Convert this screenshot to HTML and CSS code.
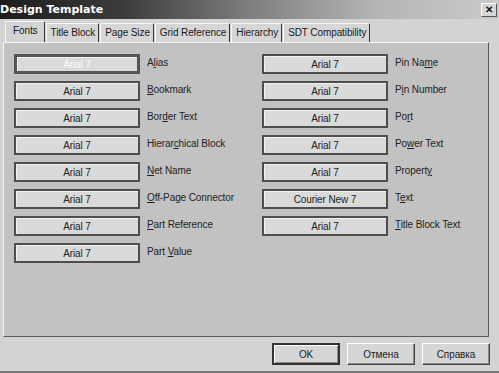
FILE: index.html
```html
<!DOCTYPE html>
<html lang="en">

<head>
    <meta charset="UTF-8">
    <title>Design Template</title>
    <link rel="stylesheet" href="styles.css">
</head>

<body>
    <div class="dialog">
        <div class="titlebar">
            <span class="title">Design Template</span>
            <span class="close">&#x2715;</span>
        </div>

        <ul class="tabs">
            <li class="tab active">Fonts</li>
            <li class="tab">Title Block</li>
            <li class="tab">Page Size</li>
            <li class="tab">Grid Reference</li>
            <li class="tab">Hierarchy</li>
            <li class="tab">SDT Compatibility</li>
        </ul>

        <div class="panel">
            <div class="col">
                <div class="row"><button class="font-btn focused">Arial 7</button><span class="label">A<u>l</u>ias</span></div>
                <div class="row"><button class="font-btn">Arial 7</button><span class="label"><u>B</u>ookmark</span></div>
                <div class="row"><button class="font-btn">Arial 7</button><span class="label">Bor<u>d</u>er Text</span></div>
                <div class="row"><button class="font-btn">Arial 7</button><span class="label">Hierar<u>c</u>hical Block</span></div>
                <div class="row"><button class="font-btn">Arial 7</button><span class="label"><u>N</u>et Name</span></div>
                <div class="row"><button class="font-btn">Arial 7</button><span class="label"><u>O</u>ff-Page Connector</span></div>
                <div class="row"><button class="font-btn">Arial 7</button><span class="label"><u>P</u>art Reference</span></div>
                <div class="row"><button class="font-btn">Arial 7</button><span class="label">Part <u>V</u>alue</span></div>
            </div>
            <div class="col">
                <div class="row"><button class="font-btn">Arial 7</button><span class="label">Pin Na<u>m</u>e</span></div>
                <div class="row"><button class="font-btn">Arial 7</button><span class="label">P<u>i</u>n Number</span></div>
                <div class="row"><button class="font-btn">Arial 7</button><span class="label">Po<u>r</u>t</span></div>
                <div class="row"><button class="font-btn">Arial 7</button><span class="label">Po<u>w</u>er Text</span></div>
                <div class="row"><button class="font-btn">Arial 7</button><span class="label">Propert<u>y</u></span></div>
                <div class="row"><button class="font-btn">Courier New 7</button><span class="label">T<u>e</u>xt</span></div>
                <div class="row"><button class="font-btn">Arial 7</button><span class="label"><u>T</u>itle Block Text</span></div>
            </div>
        </div>

        <div class="footer">
            <button class="dlg-btn default">OK</button>
            <button class="dlg-btn">Отмена</button>
            <button class="dlg-btn">Справка</button>
        </div>
    </div>
</body>

</html>
```

FILE: styles.css
```css
* {
    margin: 0;
    padding: 0;
    box-sizing: border-box;
}

body {
    font-family: "Liberation Sans", Arial, sans-serif;
    font-size: 10px;
    letter-spacing: -0.1px;
    color: #1a1a1a;
    background: #d3d3d3;
    overflow: hidden;
}

.dialog {
    width: 499px;
    height: 373px;
    background: #d3d3d3;
    border-bottom: 2px solid #7a7a7a;
}

.titlebar {
    height: 19px;
    display: flex;
    align-items: center;
    justify-content: space-between;
    padding-right: 2px;
    background: linear-gradient(to right, #1c1c1c 0%, #3c3c3c 25%, #7e7e7e 50%, #b4b4b4 75%, #cacaca 100%);
}

.title {
    color: #fff;
    font-family: "DejaVu Sans", sans-serif;
    font-weight: bold;
    font-size: 11px;
    letter-spacing: 0;
}

.close {
    width: 16px;
    height: 14px;
    display: flex;
    align-items: center;
    justify-content: center;
    background: #d6d6d6;
    border: 1px solid;
    border-color: #fff #555 #555 #fff;
    font-size: 10px;
    font-weight: bold;
    color: #111;
}

.tabs {
    list-style: none;
    display: flex;
    align-items: flex-end;
    height: 23px;
    padding-left: 5px;
}

.tab {
    height: 19px;
    padding: 0 3px 0 4px;
    line-height: 18px;
    border: 1px solid;
    border-color: #f6f6f6 #333 transparent #f6f6f6;
    border-bottom: none;
    border-radius: 2px 2px 0 0;
    background: #d6d6d6;
    margin-right: 1px;
}

.tab.active {
    height: 21px;
    padding: 0 6px 0 7px;
    background: #d3d3d3;
}

.panel {
    margin: 0 10px 0 3px;
    height: 295px;
    background: #c2c2c2;
    border: 1px solid;
    border-color: #f4f4f4 #5a5a5a #5a5a5a #f4f4f4;
    padding: 11px 0 0 10px;
    display: flex;
}

.col {
    width: 248px;
    flex: none;
    display: flex;
    flex-direction: column;
    gap: 7px;
}

.col + .col {
    flex: 1;
    width: auto;
}

.row {
    display: flex;
    align-items: center;
    height: 20px;
}

.font-btn {
    width: 126px;
    height: 20px;
    flex: none;
    font-family: "Liberation Sans", Arial, sans-serif;
    font-size: 10px;
    letter-spacing: -0.1px;
    color: #222;
    background: #dadada;
    border: 2px solid #4e4e4e;
    box-shadow: inset 1px 1px 0 #f2f2f2;
}

.font-btn.focused {
    color: #fafafa;
    border-width: 3px;
    border-color: #555;
}

.label {
    margin-left: 7px;
    margin-top: -3px;
    color: #222;
    white-space: nowrap;
}

.footer {
    display: flex;
    justify-content: flex-end;
    gap: 7px;
    padding: 6px 9px 0 0;
}

.dlg-btn {
    width: 68px;
    height: 22px;
    font-family: "Liberation Sans", Arial, sans-serif;
    font-size: 10px;
    letter-spacing: -0.1px;
    color: #222;
    background: #d6d6d6;
    border: 1px solid;
    border-color: #fff #444 #444 #fff;
    box-shadow: inset -1px -1px 0 #8a8a8a;
}

.dlg-btn.default {
    border: 2px solid #333;
    box-shadow: inset 1px 1px 0 #fff, inset -1px -1px 0 #8a8a8a;
}
```
